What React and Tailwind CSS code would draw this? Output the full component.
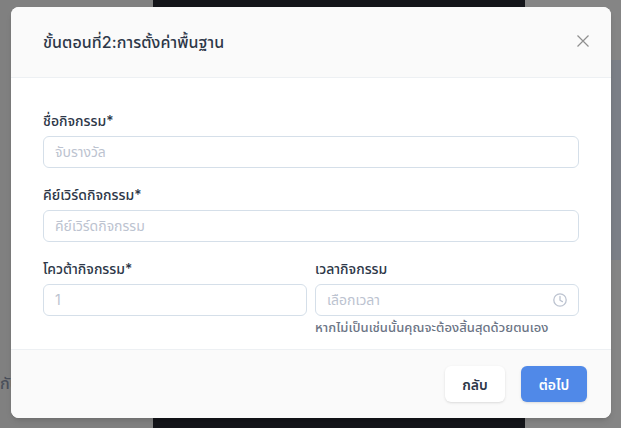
const thai = "font-['Inter','Noto_Sans','Noto_Sans_Thai','Liberation_Sans',sans-serif]";

function Field({ label, placeholder, icon, hint }) {
  return (
    <div className="flex flex-col min-w-0">
      <label className="h-[17px] mb-[7px] text-[14px] leading-[17px] font-medium text-[#2d3748]">{label}</label>
      <div className="h-8 flex items-center justify-between rounded-md border border-[#d5dfe9] bg-white pl-[11px] pr-[11px]">
        <span className="pb-[2px] text-[14px] text-[#bcc3d0]">{placeholder}</span>
        {icon}
      </div>
      {hint && <p className="mt-[3px] text-[13px] leading-[16px] tracking-[0.05px] font-medium text-[#6b7485] whitespace-nowrap">{hint}</p>}
    </div>
  );
}

function ClockIcon() {
  return (
    <svg width="14" height="14" viewBox="0 0 14 14" fill="none" stroke="#bcc3d0" strokeWidth="1.3" strokeLinecap="round">
      <circle cx="7" cy="7" r="6.2" />
      <path d="M7 3.4V7.2L9.4 8.6" />
    </svg>
  );
}

export default function App() {
  return (
    <div className={`relative w-[621px] h-[428px] overflow-hidden ${thai}`}>
      {/* page behind the overlay */}
      <div className="flex h-full bg-[#808080]">
        <div className="w-[153px] pt-[371px] pr-[142px] text-[16px] leading-6 font-medium text-[#4a4f5a] text-right whitespace-nowrap">กับ</div>
        <div className="w-[372px] bg-[#14151a]" />
        <div className="flex-1 flex flex-col items-end bg-[#858585] pt-[60px]">
          <div className="w-[10px] h-[200px] bg-[#7b7f87]" />
        </div>
      </div>

      {/* modal */}
      <div className="absolute left-[11px] top-[7px] w-[600px] h-[411px] flex flex-col rounded-lg bg-white overflow-hidden shadow-md">
        <div className="h-[71px] shrink-0 flex items-center justify-between pl-8 pr-[22px] bg-[#fafafa] border-b border-[#edf0f3]">
          <h2 className="text-[16px] tracking-[0.08px] font-medium text-[#2d3748]">ขั้นตอนที่2:การตั้งค่าพื้นฐาน</h2>
          <svg className="mb-[2px]" width="12" height="12" viewBox="0 0 12 12" stroke="#8f8f8f" strokeWidth="1.2">
            <path d="M0.5 0.5L11.5 11.5M11.5 0.5L0.5 11.5" />
          </svg>
        </div>
        <div className="flex-1 flex flex-col gap-[18px] px-8 pt-[34px]">
          <Field label="ชื่อกิจกรรม*" placeholder="จับรางวัล" />
          <Field label="คีย์เวิร์ดกิจกรรม*" placeholder="คีย์เวิร์ดกิจกรรม" />
          <div className="grid grid-cols-2 gap-2">
            <Field label="โควต้ากิจกรรม*" placeholder="1" />
            <Field
              label="เวลากิจกรรม"
              placeholder="เลือกเวลา"
              icon={<ClockIcon />}
              hint="หากไม่เป็นเช่นนั้นคุณจะต้องสิ้นสุดด้วยตนเอง"
            />
          </div>
        </div>
        <div className="h-[69px] shrink-0 flex items-center justify-end gap-4 pr-6 bg-[#fafafa] border-t border-[#edf0f3]">
          <button className="w-[60px] h-9 rounded-md bg-white text-[14px] font-semibold text-[#2d3748] shadow-sm">กลับ</button>
          <button className="w-[66px] h-9 rounded-md bg-[#5089e8] text-[14px] font-semibold text-white shadow-sm">ต่อไป</button>
        </div>
      </div>
    </div>
  );
}
